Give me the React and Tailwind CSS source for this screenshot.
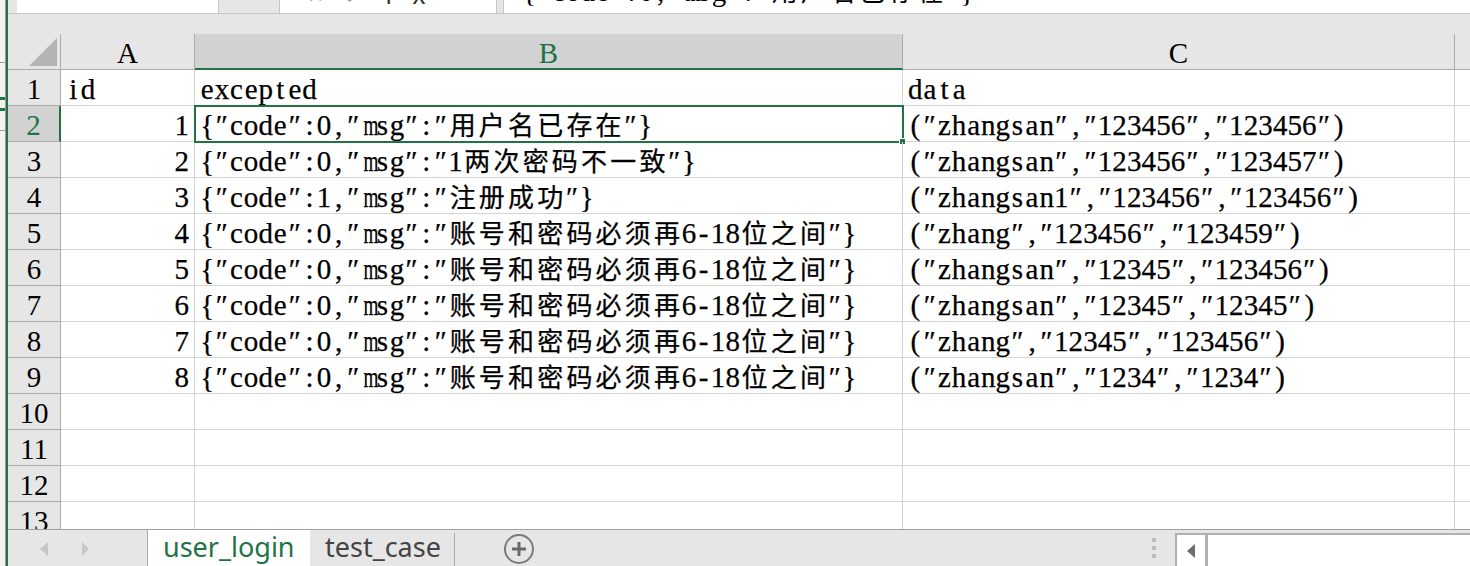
import React from "react";

const rows = [
  { id: "1", exp: '{"code":0,"msg":"用户名已存在"}', data: '("zhangsan","123456","123456")' },
  { id: "2", exp: '{"code":0,"msg":"1两次密码不一致"}', data: '("zhangsan","123456","123457")' },
  { id: "3", exp: '{"code":1,"msg":"注册成功"}', data: '("zhangsan1","123456","123456")' },
  { id: "4", exp: '{"code":0,"msg":"账号和密码必须再6-18位之间"}', data: '("zhang","123456","123459")' },
  { id: "5", exp: '{"code":0,"msg":"账号和密码必须再6-18位之间"}', data: '("zhangsan","12345","123456")' },
  { id: "6", exp: '{"code":0,"msg":"账号和密码必须再6-18位之间"}', data: '("zhangsan","12345","12345")' },
  { id: "7", exp: '{"code":0,"msg":"账号和密码必须再6-18位之间"}', data: '("zhang","12345","123456")' },
  { id: "8", exp: '{"code":0,"msg":"账号和密码必须再6-18位之间"}', data: '("zhangsan","1234","1234")' },
];

// SimSun-like: every latin char half-width, CJK full-width
function Txt({ s }) {
  return (
    <>
      {Array.from(s).map((ch, i) => {
        if (/[\u4e00-\u9fff]/.test(ch)) {
          return (
            <span key={i} className="inline-block w-[29.2px] text-center font-['Noto_Sans_CJK_SC',sans-serif] text-[26px] leading-none">
              {ch}
            </span>
          );
        }
        const wide = /[mwMW]/.test(ch);
        return (
          <span key={i} className={"inline-block w-[14.6px] text-center" + (wide ? " scale-x-[0.66]" : "")}>
            {ch === '"' ? "\u2033" : ch}
          </span>
        );
      })}
    </>
  );
}

const serif = "font-['Liberation_Serif','Noto_Sans_CJK_SC',serif]";
const cellText = serif + " text-[29px] leading-[32px] pt-[3px] text-black whitespace-nowrap [-webkit-text-stroke:0.25px_black]";
const headText = serif + " text-[29px] leading-[32px] pt-[3px]";

function RowHead({ n, selected }) {
  return (
    <div
      className={
        "w-[53px] shrink-0 h-full text-center border-b border-[#ababab] " +
        headText +
        (selected
          ? " bg-[#d2d2d2] text-[#217346] border-r-2 border-r-[#217346]"
          : " bg-[#e6e6e6] text-black border-r border-r-[#ababab]")
      }
    >
      {n}
    </div>
  );
}

function GridRow({ n, a, b, c, alignRight, active }) {
  return (
    <div className="flex h-[36px] shrink-0">
      <RowHead n={n} selected={active} />
      <div className={"w-[134px] shrink-0 border-r border-b border-[#d4d4d4] " + cellText + (alignRight ? " text-right pr-[5px]" : " pl-[5px]")}>
        {a ? <Txt s={a} /> : null}
      </div>
      <div className={"relative w-[708px] shrink-0 border-r border-b border-[#d4d4d4] pl-[5px] " + cellText}>
        {b ? <Txt s={b} /> : null}
        {active && (
          <div className="absolute -left-[1px] -top-[1px] w-[710px] h-[38px] border-2 border-[#217346]">
            <div className="absolute -right-[4px] -bottom-[4px] w-[7px] h-[7px] bg-[#217346] border border-white" />
          </div>
        )}
      </div>
      <div className={"w-[552px] shrink-0 border-r border-b border-[#d4d4d4] pl-[5px] " + cellText}>
        {c ? <Txt s={c} /> : null}
      </div>
      <div className="flex-1 border-b border-[#d4d4d4]" />
    </div>
  );
}

export default function App() {
  return (
    <div className="w-[1470px] h-[566px] overflow-hidden flex bg-[#e6e6e6]">
      {/* sliver of the window behind */}
      <div className="w-[6px] shrink-0 bg-[#f3f3f3] border-r border-[#9a9a9a] flex flex-col">
        <div className="h-[63px] border-b border-[#9a9a9a]" />
        <div className="h-[34px]" />
        <div className="h-[3px] bg-[#217346]" />
        <div className="h-[8px]" />
        <div className="h-[3px] bg-[#217346]" />
        <div className="h-[20px] border-b border-[#9a9a9a]" />
      </div>
      <div className="w-[2px] shrink-0 bg-[#217346]" />

      <div className="flex-1 flex flex-col min-w-0">
        {/* formula bar, cut off at the top */}
        <div className="h-[14px] shrink-0 flex border-b border-[#c6c6c6]">
          <div className="w-[9px] shrink-0 bg-[#e6e6e6]" />
          <div className="w-[202px] shrink-0 bg-white border-r border-[#c6c6c6]" />
          <div className="w-[60px] shrink-0 bg-[#e6e6e6]" />
          <div className="w-[218px] shrink-0 bg-white border-r border-l border-[#c6c6c6] overflow-hidden">
            <div className="-mt-[24px] pl-[28px] font-['Liberation_Sans',sans-serif] text-[26px] text-[#9a9a9a] tracking-[20px] whitespace-nowrap">
              ×✓<span className="text-[#333]">fx</span>
            </div>
          </div>
          <div className="w-[6px] shrink-0 bg-[#e6e6e6]" />
          <div className="flex-1 bg-white border-l border-[#c6c6c6] overflow-hidden">
            <div className={"-mt-[25px] pl-[18px] text-[29px] leading-[32px] text-black whitespace-nowrap " + serif}>
              <Txt s={'{"code":0,"msg":"用户名已存在"}'} />
            </div>
          </div>
        </div>
        <div className="h-[20px] shrink-0" />

        {/* sheet */}
        <div className="flex-1 flex flex-col overflow-hidden bg-white">
          {/* column headers */}
          <div className="flex h-[36px] shrink-0">
            <div className="w-[53px] shrink-0 bg-[#e6e6e6] border-r border-b border-[#ababab] flex items-end justify-end pr-[3px] pb-[3px]">
              <svg width="28" height="28" viewBox="0 0 28 28">
                <polygon points="28,0 28,28 0,28" fill="#b4b4b4" />
              </svg>
            </div>
            <div className={"w-[134px] shrink-0 bg-[#e6e6e6] border-r border-b border-[#ababab] text-center text-black " + headText}>A</div>
            <div className={"w-[708px] shrink-0 bg-[#d2d2d2] border-r border-r-[#ababab] border-b-2 border-b-[#217346] text-center text-[#217346] " + headText}>B</div>
            <div className={"w-[552px] shrink-0 bg-[#e6e6e6] border-r border-b border-[#ababab] text-center text-black " + headText}>C</div>
            <div className="flex-1 bg-[#e6e6e6] border-b border-[#ababab]" />
          </div>

          <GridRow n="1" a="id" b="excepted" c="data" />
          {rows.map((r, i) => (
            <GridRow key={r.id} n={String(i + 2)} a={r.id} b={r.exp} c={r.data} alignRight active={i === 0} />
          ))}
          {[10, 11, 12, 13].map((n) => (
            <GridRow key={n} n={String(n)} a="" b="" c="" />
          ))}
        </div>

        {/* sheet tabs */}
        <div className="h-[37px] shrink-0 flex border-t border-[#a0a0a0] bg-[#e6e6e6]">
          <div className="w-[139px] shrink-0 flex items-center pl-[32px] gap-[34px] pt-[2px]">
            <svg width="8" height="14" viewBox="0 0 8 14">
              <polygon points="8,0 8,14 0,7" fill="#c6c6c6" />
            </svg>
            <svg width="7" height="14" viewBox="0 0 7 14">
              <polygon points="0,0 7,7 0,14" fill="#c6c6c6" />
            </svg>
          </div>
          <div className="w-[163px] shrink-0 bg-white border-l border-[#ababab] pl-[15px] font-['Noto_Sans',sans-serif] text-[27px] leading-[34px] text-[#217346]">
            user_login
          </div>
          <div className="w-[145px] shrink-0 flex">
            <div className="flex-1 pl-[15px] font-['Noto_Sans',sans-serif] text-[27px] leading-[34px] text-[#444]">test_case</div>
            <div className="w-px bg-[#ababab] mt-[3px]" />
          </div>
          <div className="w-[48px] shrink-0" />
          <div className="flex items-center pt-[1px]">
            <svg width="32" height="32" viewBox="0 0 32 32">
              <circle cx="16" cy="16" r="14" fill="none" stroke="#7a7a7a" strokeWidth="2" />
              <path d="M16 9v14M9 16h14" stroke="#6a6a6a" strokeWidth="3" />
            </svg>
          </div>
          <div className="flex-1" />
          <div className="w-[4px] shrink-0 flex flex-col justify-center gap-[4px] mr-[19px]">
            <div className="h-[4px] bg-[#bcbcbc]" />
            <div className="h-[4px] bg-[#bcbcbc]" />
            <div className="h-[4px] bg-[#bcbcbc]" />
          </div>
          <div className="w-[295px] shrink-0 mt-[3px] flex border-2 border-r-0 border-b-0 border-[#b0b0b0] bg-white">
            <div className="w-[31px] shrink-0 flex items-center justify-center border-r-[3px] border-[#b0b0b0]">
              <svg width="8" height="14" viewBox="0 0 8 14">
                <polygon points="8,0 8,14 0,7" fill="#6d6d6d" />
              </svg>
            </div>
            <div className="flex-1" />
          </div>
        </div>
      </div>
    </div>
  );
}
